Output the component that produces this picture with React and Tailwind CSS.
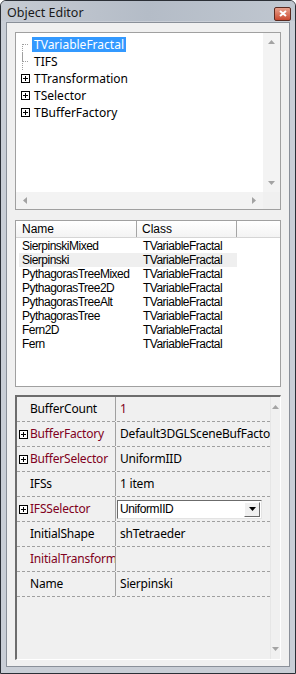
import React from "react";

const treeItems = [
    { name: "TVariableFractal", plus: false, selected: true },
    { name: "TIFS", plus: false },
    { name: "TTransformation", plus: true },
    { name: "TSelector", plus: true },
    { name: "TBufferFactory", plus: true },
];

const listItems = [
    "SierpinskiMixed",
    "Sierpinski",
    "PythagorasTreeMixed",
    "PythagorasTree2D",
    "PythagorasTreeAlt",
    "PythagorasTree",
    "Fern2D",
    "Fern",
];

const props = [
    { name: "BufferCount", value: "1", red: false, valueRed: true },
    { name: "BufferFactory", value: "Default3DGLSceneBufFacto", red: true, plus: true },
    { name: "BufferSelector", value: "UniformIID", red: true, plus: true },
    { name: "IFSs", value: "1 item" },
    { name: "IFSSelector", value: "UniformIID", red: true, plus: true, combo: true },
    { name: "InitialShape", value: "shTetraeder" },
    { name: "InitialTransform", value: "", red: true },
    { name: "Name", value: "Sierpinski" },
];

function PlusBox() {
    return (
        <div className="w-[9px] h-[9px] border border-[#000] bg-white flex items-center justify-center shrink-0">
            <svg width="7" height="7" viewBox="0 0 7 7">
                <path d="M1 3.5h5M3.5 1v5" stroke="#000" strokeWidth="1" shapeRendering="crispEdges" />
            </svg>
        </div>
    );
}

function Arrow({ dir }) {
    const d = {
        up: "M0 4L3.5 0L7 4Z",
        down: "M0 0L7 0L3.5 4Z",
        left: "M4 0L4 7L0 3.5Z",
        right: "M0 0L0 7L4 3.5Z",
    }[dir];
    const w = dir === "up" || dir === "down" ? 7 : 4;
    const h = dir === "up" || dir === "down" ? 4 : 7;
    return (
        <svg width={w} height={h} viewBox={`0 0 ${w} ${h}`}>
            <path d={d} fill="#a3a3a3" />
        </svg>
    );
}

export default function App() {
    return (
        <div
            className="w-[296px] h-[674px] flex flex-col bg-[#c9ced6] border border-[#2b2f36] rounded-t-[6px] overflow-hidden"
            style={{ fontFamily: "'Noto Sans', 'Open Sans', sans-serif" }}
        >
            {/* title bar */}
            <div className="h-[20px] flex items-center justify-between pl-[6px] pr-[4px] bg-gradient-to-r from-[#c6cbd3] via-[#b4bcc7] to-[#c0c7d0] shrink-0">
                <div className="text-[12.5px] text-[#1a1a1a] leading-none mt-[4px]">Object Editor</div>
                <div className="w-[17px] h-[14px] mt-[5px] rounded-[2px] border border-[#5a2a20] bg-gradient-to-b from-[#e8a08c] to-[#c9472e] flex items-center justify-center">
                    <svg width="8" height="7" viewBox="0 0 8 7">
                        <path d="M1 1L7 6M7 1L1 6" stroke="#fff" strokeWidth="2" />
                    </svg>
                </div>
            </div>

            {/* client */}
            <div className="flex-1 mx-[5px] mb-[6px] mt-[1px] bg-[#f0f0f0] border border-[#8a9099] flex flex-col px-[8px] pt-[9px]">
                {/* tree */}
                <div className="h-[178px] border border-[#a0a0a0] bg-white flex flex-col shrink-0">
                    <div className="flex-1 flex min-h-0">
                        <div className="flex-1 pt-[3px] text-[12px] text-[#000]">
                            {treeItems.map((t, i) => (
                                <div key={t.name} className="h-[17px] flex items-center pl-[3px]">
                                    <div className="w-[12px] flex justify-center items-center h-full shrink-0">
                                        {t.plus ? (
                                            <PlusBox />
                                        ) : (
                                            <div className="w-[6px] h-full flex">
                                                <div className={`border-l border-dotted border-[#a0a0a0] ${i === 0 ? "mt-[8px]" : ""} h-full`} />
                                                <div className="border-t border-dotted border-[#a0a0a0] w-[5px] mt-[8px]" />
                                            </div>
                                        )}
                                    </div>
                                    <span
                                        className={`ml-[1px] px-[2px] leading-[15px] ${t.selected ? "bg-[#3399ff] text-white" : ""}`}
                                    >
                                        {t.name}
                                    </span>
                                </div>
                            ))}
                        </div>
                        <div className="w-[17px] bg-[#f3f3f3] flex flex-col justify-between items-center py-[7px]">
                            <Arrow dir="up" />
                            <Arrow dir="down" />
                        </div>
                    </div>
                    <div className="h-[17px] flex shrink-0">
                        <div className="flex-1 bg-[#f3f3f3] flex items-center justify-between px-[7px]">
                            <Arrow dir="left" />
                            <Arrow dir="right" />
                        </div>
                        <div className="w-[17px] bg-[#f0f0f0]" />
                    </div>
                </div>

                <div className="h-[10px] shrink-0" />

                {/* list */}
                <div className="h-[167px] border border-[#a0a0a0] bg-white flex flex-col shrink-0" style={{ fontFamily: "'Liberation Sans', Arial, sans-serif" }}>
                    <div className="h-[17px] flex text-[12px] text-[#000] border-b border-[#d5d5d5] bg-gradient-to-b from-[#ffffff] to-[#f3f3f3]">
                        <div className="w-[121px] pl-[6px] flex items-center border-r border-[#a5a5a5]">Name</div>
                        <div className="w-[100px] pl-[5px] flex items-center border-r border-[#a5a5a5]">Class</div>
                        <div className="flex-1" />
                    </div>
                    <div className="pt-[1px] text-[12px] text-[#000] tracking-[-0.5px]">
                        {listItems.map((n, i) => (
                            <div key={n} className={`h-[14px] flex items-center ml-[3px] w-[218px] ${i === 1 ? "bg-[#efefef]" : ""}`}>
                                <div className="w-[124px] pl-[3px]">{n}</div>
                                <div>TVariableFractal</div>
                            </div>
                        ))}
                    </div>
                </div>

                <div className="h-[8px] shrink-0" />

                {/* property grid */}
                <div className="h-[265px] flex bg-[#f0f0f0] border-l-2 border-t-2 border-[#6d6d6d] border-r border-b border-r-[#fff] border-b-[#fff] shrink-0">
                    <div className="flex-1 flex flex-col text-[12px] tracking-[-0.2px]">
                        {props.map((p) => (
                            <div key={p.name} className="h-[25px] flex border-b border-dashed border-[#a0a0a0] shrink-0">
                                <div className="w-[99px] shrink-0 flex items-center border-r border-[#a0a0a0] overflow-hidden whitespace-nowrap">
                                    <div className="w-[12px] pl-[1px] flex justify-center shrink-0">{p.plus && <PlusBox />}</div>
                                    <span className={`pl-[1px] shrink-0 ${p.red ? "text-[#800020]" : "text-[#000]"}`}>{p.name}</span>
                                </div>
                                <div className="flex-1 flex items-center overflow-hidden whitespace-nowrap">
                                    {p.combo ? (
                                        <div className="ml-[1px] w-[145px] h-[19px] bg-white border border-[#6b6b6b] border-r-[#e3e3e3] border-b-[#e3e3e3] flex items-center">
                                            <span className="flex-1 pl-[2px] text-[12px] text-[#000] tracking-[-0.4px]" style={{ fontFamily: "'Liberation Sans', Arial, sans-serif" }}>UniformIID</span>
                                            <div className="w-[16px] h-[15px] mr-[1px] bg-[#f0f0f0] border border-[#fff] border-r-[#696969] border-b-[#696969] flex items-center justify-center">
                                                <svg width="7" height="4" viewBox="0 0 7 4">
                                                    <path d="M0 0L7 0L3.5 4Z" fill="#000" />
                                                </svg>
                                            </div>
                                        </div>
                                    ) : (
                                        <span className={`pl-[4px] ${p.valueRed ? "text-[#800020]" : "text-[#000]"}`}>{p.value}</span>
                                    )}
                                </div>
                            </div>
                        ))}
                    </div>
                    <div className="w-[16px] bg-[#f0f0f0] border-l border-[#e6e6e6] flex flex-col justify-between items-center py-[8px]">
                        <Arrow dir="up" />
                        <Arrow dir="down" />
                    </div>
                </div>
            </div>
        </div>
    );
}
